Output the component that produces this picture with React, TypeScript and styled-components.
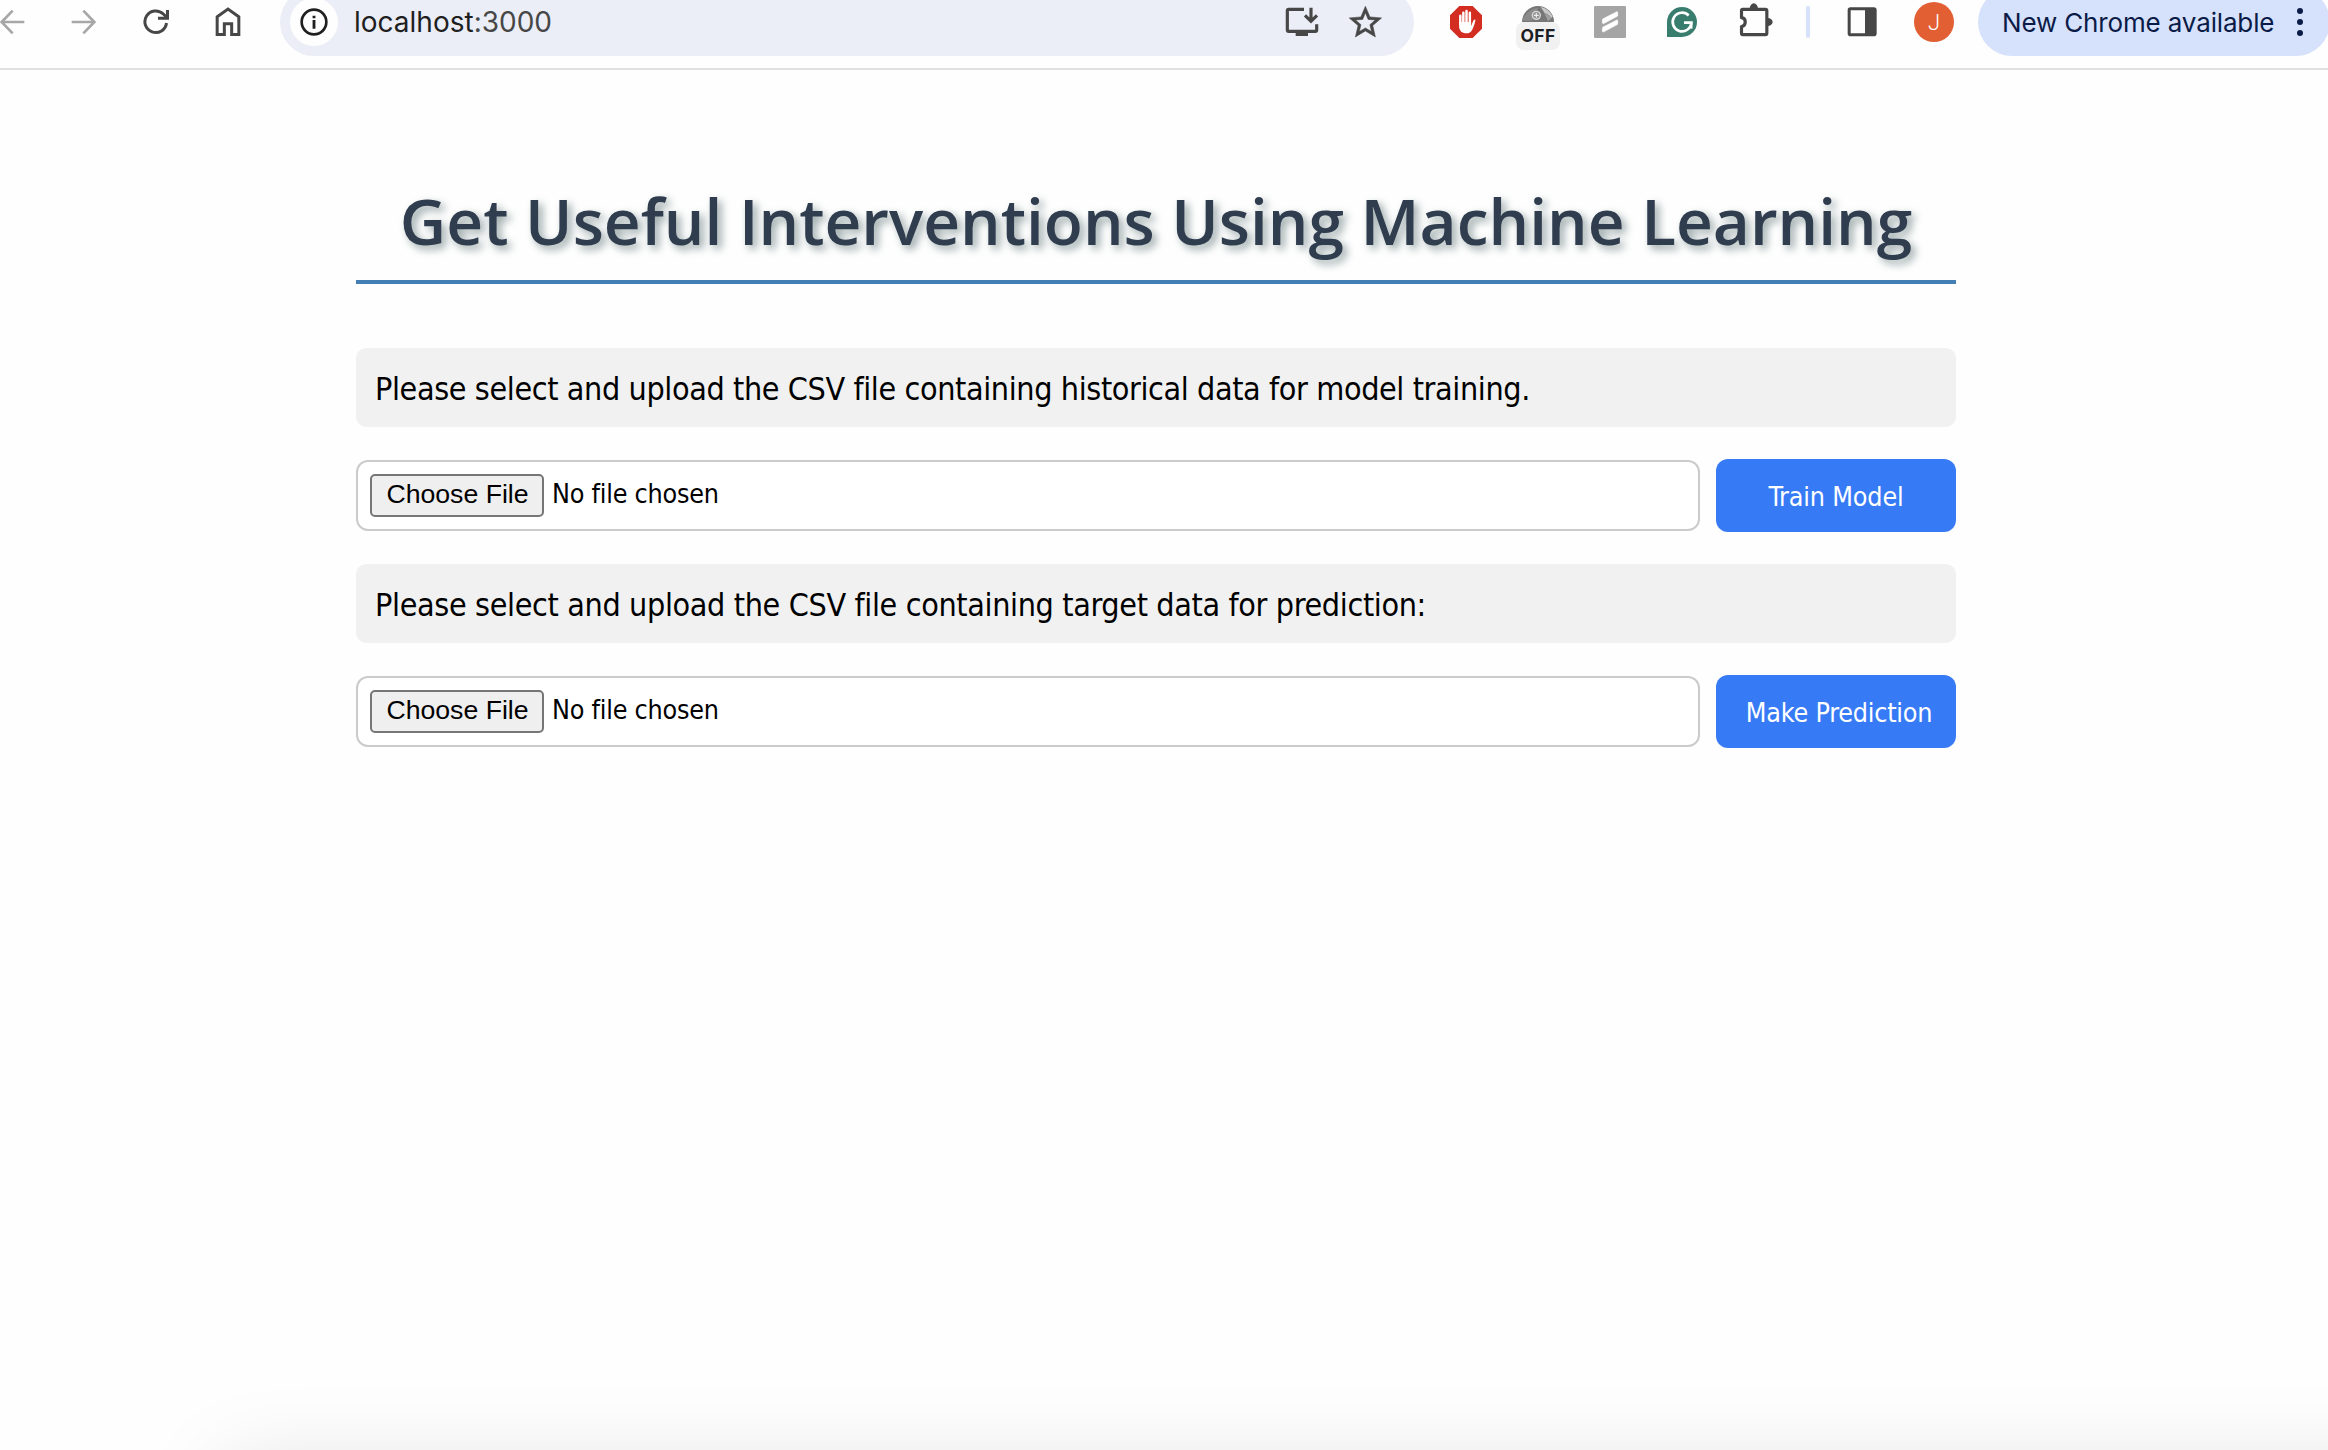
import React from "react";
import styled, { createGlobalStyle } from "styled-components";

const GlobalStyle = createGlobalStyle`
  *, *::before, *::after { box-sizing: border-box; }
  html, body { margin: 0; padding: 0; background: #fefefe; overflow: hidden; }
`;

const ui = `"Inter", "Roboto", sans-serif`;
const tahoma = `"DejaVu Sans Condensed", "DejaVu Sans", sans-serif`;

const Window = styled.div`
  width: 2328px;
  height: 1450px;
  display: flex;
  flex-direction: column;
  position: relative;
  overflow: hidden;
`;

/* Browser toolbar */

const Toolbar = styled.header`
  flex: none;
  display: flex;
  align-items: center;
  height: 70px;
  padding-bottom: 24px;
  border-bottom: 2px solid #e0e0e0;
`;

const Slot = styled.div<{ $gap?: number }>`
  flex: none;
  display: flex;
  align-items: center;
  justify-content: center;
  margin-left: ${(p) => p.$gap ?? 0}px;
  svg { display: block; }
`;

const Omnibox = styled.div`
  flex: none;
  display: flex;
  align-items: center;
  width: 1134px;
  height: 68px;
  margin-left: 39px;
  padding: 0 28.8px 0 10px;
  border-radius: 34px;
  background: #ebeef7;
`;

const SiteInfo = styled.div`
  display: flex;
  align-items: center;
  justify-content: center;
  width: 48px;
  height: 48px;
  border-radius: 50%;
  background: #fefefe;
`;

const Address = styled.div`
  flex: 1;
  padding-left: 16px;
  font: 400 28px/34px ${ui};
  color: #474747;
`;

const Host = styled.span`
  color: #1f1f1f;
`;

const BlockedExtension = styled(Slot)`
  position: relative;
  width: 44px;
  height: 44px;
`;

const OffBadge = styled.span`
  position: absolute;
  left: 0;
  top: 22px;
  width: 44px;
  height: 28px;
  border-radius: 8px;
  background: #f1f1f1;
  color: #1b1e22;
  font: 700 17.5px/27px ${ui};
  letter-spacing: 0.3px;
  text-align: center;
`;

const Separator = styled.div`
  flex: none;
  width: 4px;
  height: 32px;
  margin-left: 32px;
  border-radius: 2px;
  background: #d6e2fb;
`;

const Avatar = styled.div`
  flex: none;
  width: 40px;
  height: 40px;
  margin-left: 37px;
  border-radius: 50%;
  background: #e25f34;
  color: #fff;
  font: 300 22px/41px "Roboto", sans-serif;
  text-align: center;
`;

const UpdateChip = styled.div`
  flex: none;
  display: flex;
  align-items: center;
  width: 352px;
  height: 68px;
  margin-left: 24px;
  padding-left: 24px;
  border-radius: 34px;
  background: #d6e2fb;
  color: #0b1b48;
  font: 400 26px/32px ${ui};
  letter-spacing: -0.15px;
  white-space: nowrap;
`;

const UpdateLabel = styled.span`
  width: 295px;
  padding-top: 1px;
`;

const Dots = styled.span`
  display: grid;
  gap: 5px;
  i {
    width: 6px;
    height: 6px;
    border-radius: 50%;
    background: #0b1b48;
  }
`;

/* Page */

const Page = styled.main`
  display: flex;
  flex-direction: column;
  width: 1600px;
  margin: 107px 0 0 356px;
`;

const Title = styled.h1`
  margin: 0 0 64px;
  height: 107px;
  border-bottom: 4px solid #437fb5;
  font: 600 64px/87px "Open Sans", "Noto Sans", sans-serif;
  color: #2f3d4f;
  text-align: center;
  white-space: nowrap;
  text-shadow: 4px 4px 8px #95a3a4;
`;

const Prompt = styled.p<{ $tracking: number }>`
  display: flex;
  align-items: center;
  height: 79px;
  margin: 0;
  padding: 4px 19px 0;
  border-radius: 10px;
  background: #f1f1f1;
  color: #000;
  font: 400 32px/39px ${tahoma};
  font-variant-ligatures: none;
  letter-spacing: ${(p) => p.$tracking}px;
`;

const UploadRow = styled.div`
  display: flex;
  align-items: center;
  gap: 16px;
  height: 73px;
  margin: 32px 0;
`;

const FileField = styled.div`
  flex: 1;
  display: flex;
  align-items: baseline;
  gap: 8px;
  height: 71px;
  padding: 12px 12px 0;
  border: 2px solid #cbcbcb;
  border-radius: 12px;
  background: #fff;
`;

const ChooseButton = styled.button`
  width: 174px;
  height: 43px;
  padding: 0 0 2px 1px;
  border: 2px solid #767676;
  border-radius: 5px;
  background: #efefef;
  color: #000;
  font: 400 26.67px/37px "Liberation Sans", Arial, sans-serif;
`;

const FileName = styled.span`
  font: 400 26.67px/32px ${tahoma};
  font-variant-ligatures: none;
  letter-spacing: -0.22px;
  color: #000;
`;

const ActionButton = styled.button<{ $inset?: number; $tracking?: number }>`
  width: 240px;
  height: 73px;
  padding: 3px 0 0 ${(p) => p.$inset ?? 0}px;
  border: 0;
  border-radius: 12px;
  background: #367af6;
  color: #fff;
  font: 400 26.67px/32px ${tahoma};
  letter-spacing: ${(p) => p.$tracking ?? 0}px;
  white-space: nowrap;
`;

const WindowShadow = styled.div`
  position: absolute;
  left: 225px;
  right: -200px;
  top: 1470px;
  height: 200px;
  box-shadow: 0 0 90px rgba(0, 0, 0, 0.13);
`;

/* Icons, drawn on a grid of three units per pixel */

type GlyphProps = { box: [number, number, number, number]; children: React.ReactNode };

const Glyph = ({ box, children }: GlyphProps) => (
  <svg width={box[2] / 3} height={box[3] / 3} viewBox={box.join(" ")} fill="none">
    {children}
  </svg>
);

const ink = "#474747";

const BackIcon = () => (
  <Glyph box={[0, 24, 75, 84]}>
    <path d="M73 66H6M38 32 5 66l33 34" stroke="#a7a7a7" strokeWidth="8" />
  </Glyph>
);

const ForwardIcon = () => (
  <Glyph box={[213, 24, 75, 84]}>
    <path d="M215 66h67M250 32l33 34-33 34" stroke="#a7a7a7" strokeWidth="8" />
  </Glyph>
);

const ReloadIcon = () => (
  <Glyph box={[429, 24, 81, 84]}>
    <path d="M499.500 69A32.500 32.500 0 1 1 490 42L502 54" stroke={ink} strokeWidth="9" />
    <path d="M502.500 30V54.500H474" stroke={ink} strokeWidth="9" />
  </Glyph>
);

const HomeIcon = () => (
  <Glyph box={[645, 21, 78, 90]}>
    <path d="M651.500 103.500V50.500L684 27l32.500 23.500V103.500H695V71h-22v32.500z" stroke={ink} strokeWidth="9" />
  </Glyph>
);

const InfoIcon = () => (
  <Glyph box={[897, 21, 90, 90]}>
    <circle cx="942" cy="66" r="37" stroke="#1f1f1f" strokeWidth="8" />
    <path d="M942 60v26M942 47v8" stroke="#1f1f1f" strokeWidth="8.500" />
  </Glyph>
);

const InstallIcon = () => (
  <Glyph box={[75, 21, 102, 90]}>
    <path d="M132 28H86q-4 0-4 4v58q0 4 4 4h80q4 0 4-4V73" stroke={ink} strokeWidth="9.500" />
    <path d="M107 94h37v14h-37z" fill={ink} />
    <path d="M153 23v40M135 46l18 18 18-18" stroke={ink} strokeWidth="9.500" />
  </Glyph>
);

const StarIcon = () => (
  <svg width="38.8" height="38.8" viewBox="0 0 24 24" fill={ink} stroke={ink} strokeWidth="0.35">
    <path d="m22 9.240-7.190-.620L12 2 9.190 8.630 2 9.240l5.460 4.730L5.820 21 12 17.270 18.180 21l-1.630-7.030L22 9.240zM12 15.400l-3.760 2.270 1-4.280-3.320-2.880 4.380-.380L12 6.100l1.710 4.040 4.380.380-3.320 2.880 1 4.280L12 15.400z" />
  </svg>
);

const StopHandIcon = () => (
  <Glyph box={[570, 18, 96, 96]}>
    <path d="M598 18h40l28 28v40l-28 28h-40l-28-28V46z" fill="#d32d21" />
    <path d="M601 47v26M610 38v34M619.500 33v38M629.500 38v36" stroke="#fff" strokeWidth="7.500" strokeLinecap="round" />
    <path d="M597.300 66h36v13c3-8 5-14 8-19 2-3 5-2 5 1-2 10-5 20-10 29-4 7-9 10-17 10-14 0-22-8-22-22z" fill="#fff" />
  </Glyph>
);

const DomeIcon = () => (
  <Glyph box={[66, 0, 96, 132]}>
    <path d="M66 66a48 48 0 0 1 96 0z" fill="#777" />
    <path d="M66 62q14-34 48-39l-18 39z" fill="#8b8b8b" />
    <path d="M122 21q26 6 36 29l-14 12q-8-24-22-41z" fill="#c9c9c9" />
    <path d="M132 38q14 2 22 14l-10 10q-4-14-12-24z" fill="#9c9c9c" />
    <circle cx="109" cy="46" r="12" stroke="#d9d9d9" strokeWidth="4" fill="#929292" />
    <path d="M109 39v14M102 46h14" stroke="#eee" strokeWidth="3.500" />
  </Glyph>
);

const ScribeIcon = () => (
  <Glyph box={[282, 18, 96, 96]}>
    <rect x="282" y="18" width="96" height="96" rx="4" fill="#a5a5a5" />
    <path
      d="M308 57l43-22 2 1v12l-43 23-3-2zM308 82l43-22 2 1v12l-43 23-3-2z"
      fill="#fff"
      stroke="#fff"
      strokeWidth="2"
      strokeLinejoin="round"
    />
  </Glyph>
);

const GrammarIcon = () => (
  <Glyph box={[201, 21, 90, 90]}>
    <path d="M246 21a45 45 0 1 1 0 90h-45V66a45 45 0 0 1 45-45z" fill="#397d6e" />
    <path d="M266 46.500A28 28 0 1 0 274 68H252" stroke="#fff" strokeWidth="8" />
    <path d="M274.500 66v20" stroke="#fff" strokeWidth="6" />
  </Glyph>
);

const PuzzleIcon = () => (
  <Glyph box={[417, 6, 105, 120]}>
    <path
      d="M424.500 53V32q0-4 4-4h68q4 0 4 4v68q0 4-4 4h-68q-4 0-4-4V79.500c15-2 15-25 0-26.500z"
      stroke={ink}
      strokeWidth="9.500"
      strokeLinejoin="round"
    />
    <path d="M449 26a12.500 16 0 0 1 25 0zM503 54a15 12 0 0 1 0 24z" fill={ink} />
  </Glyph>
);

const SidePanelIcon = () => (
  <Glyph box={[741, 21, 90, 90]}>
    <rect x="747.500" y="26.500" width="78" height="78" rx="4" stroke={ink} strokeWidth="9" />
    <path d="M795 26h31v78h-31z" fill={ink} />
  </Glyph>
);

const FileUpload = () => (
  <FileField>
    <ChooseButton>Choose File</ChooseButton>
    <FileName>No file chosen</FileName>
  </FileField>
);

export default function App() {
  return (
    <Window>
      <GlobalStyle />
      <Toolbar>
        <Slot><BackIcon /></Slot>
        <Slot $gap={46}><ForwardIcon /></Slot>
        <Slot $gap={47}><ReloadIcon /></Slot>
        <Slot $gap={45}><HomeIcon /></Slot>
        <Omnibox>
          <SiteInfo><InfoIcon /></SiteInfo>
          <Address><Host>localhost</Host>:3000</Address>
          <Slot><InstallIcon /></Slot>
          <Slot $gap={27.4}><StarIcon /></Slot>
        </Omnibox>
        <Slot $gap={36}><StopHandIcon /></Slot>
        <BlockedExtension $gap={34}>
          <DomeIcon />
          <OffBadge>OFF</OffBadge>
        </BlockedExtension>
        <Slot $gap={34}><ScribeIcon /></Slot>
        <Slot $gap={41}><GrammarIcon /></Slot>
        <Slot $gap={42}><PuzzleIcon /></Slot>
        <Separator />
        <Slot $gap={37}><SidePanelIcon /></Slot>
        <Avatar>J</Avatar>
        <UpdateChip>
          <UpdateLabel>New Chrome available</UpdateLabel>
          <Dots><i /><i /><i /></Dots>
        </UpdateChip>
      </Toolbar>
      <Page>
        <Title>Get Useful Interventions Using Machine Learning</Title>
        <Prompt $tracking={-0.39}>
          Please select and upload the CSV file containing historical data for model training.
        </Prompt>
        <UploadRow>
          <FileUpload />
          <ActionButton $tracking={-0.15}>Train Model</ActionButton>
        </UploadRow>
        <Prompt $tracking={-0.36}>
          Please select and upload the CSV file containing target data for prediction:
        </Prompt>
        <UploadRow>
          <FileUpload />
          <ActionButton $inset={6} $tracking={-0.22}>Make Prediction</ActionButton>
        </UploadRow>
      </Page>
      <WindowShadow />
    </Window>
  );
}
